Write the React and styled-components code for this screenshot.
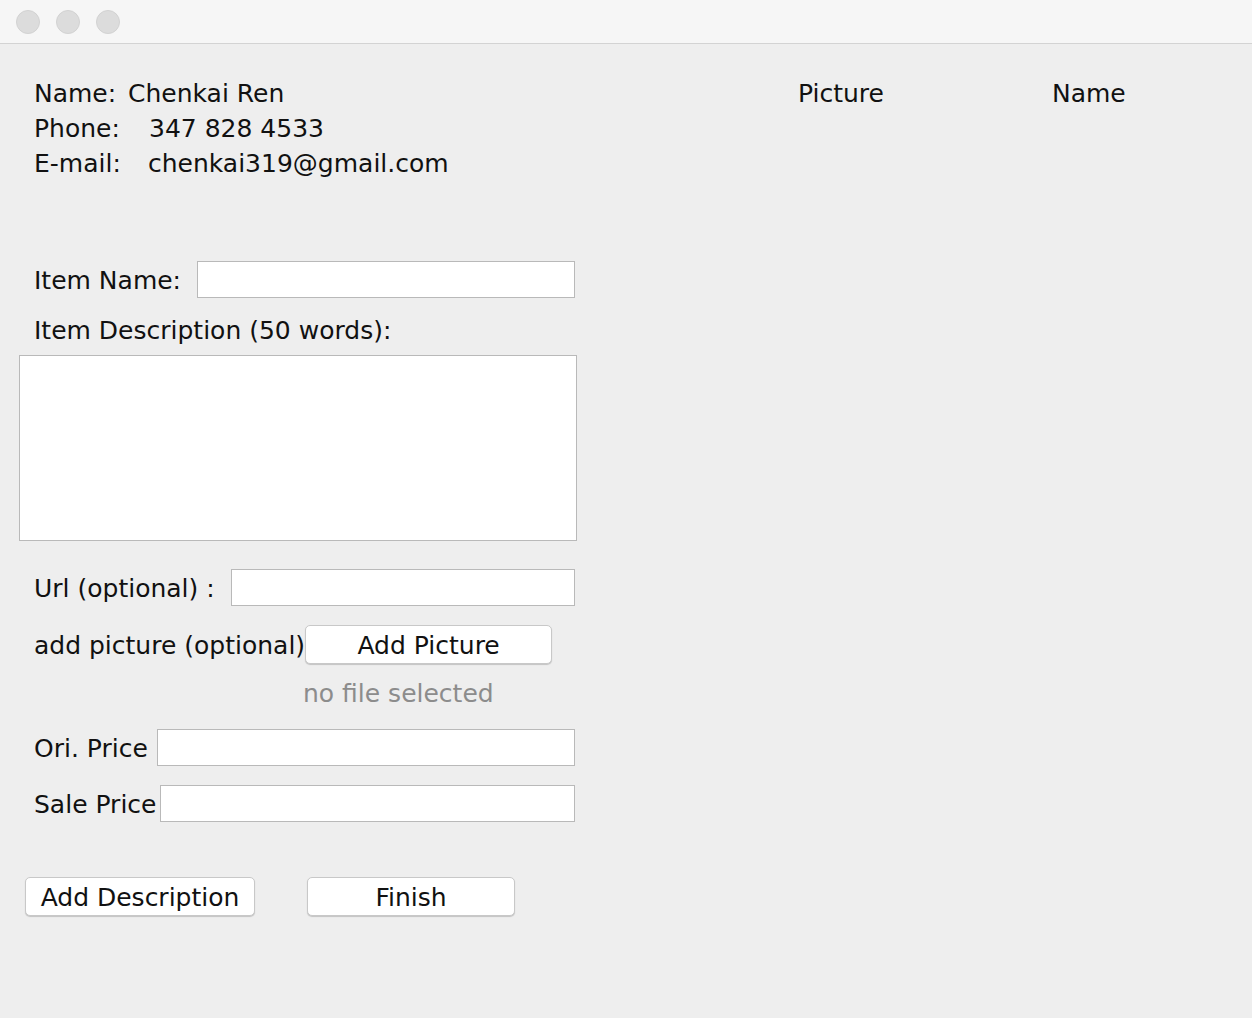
import React from 'react';
import styled, { createGlobalStyle } from 'styled-components';

const GlobalStyle = createGlobalStyle`
  html, body {
    margin: 0;
    padding: 0;
    background: #eeeeee;
  }

  body {
    font-family: 'DejaVu Sans', 'Liberation Sans', sans-serif;
    color: #111;
  }
`;

const Window = styled.div`
  width: 1252px;
  height: 1018px;
  background: #eeeeee;
  display: flex;
  flex-direction: column;
  overflow: hidden;
`;

const TitleBar = styled.div`
  height: 43px;
  flex-shrink: 0;
  background: #f6f6f6;
  border-bottom: 1px solid #d3d3d3;
  display: flex;
  align-items: center;
  gap: 16px;
  padding-left: 16px;
`;

const Light = styled.span`
  width: 24px;
  height: 24px;
  border-radius: 50%;
  background: #dcdcdc;
  border: 1px solid #d2d2d2;
  box-sizing: border-box;
`;

const Content = styled.div`
  padding: 31px 0 0 19px;
  font-size: 25px;
`;

const Header = styled.div`
  display: flex;
  align-items: flex-start;
  padding: 1px 0 0 15px;
`;

const Contact = styled.div`
  width: 764px;
  line-height: 35px;
`;

const Line = styled.div`
  display: flex;
  white-space: nowrap;
`;

const Key = styled.span`
  width: ${(p) => p.$w}px;
  flex-shrink: 0;
`;

const ColumnTitle = styled.div`
  line-height: 35px;
  width: ${(p) => p.$w}px;
`;

const Form = styled.div`
  margin-top: 80px;
  width: 560px;
  display: flex;
  flex-direction: column;
`;

const Row = styled.div`
  display: flex;
  align-items: center;
  height: ${(p) => p.$h || 37}px;
  margin-top: ${(p) => p.$top || 0}px;
  padding-left: 15px;
`;

const Label = styled.span`
  white-space: nowrap;
  padding-top: 2px;
  margin-right: ${(p) => p.$gap || 0}px;
`;

const Field = styled.div`
  flex: 1;
  height: 37px;
  background: #fff;
  border: 1px solid #b9b9b9;
  box-sizing: border-box;
  margin-right: 4px;
`;

const TextLabel = styled.div`
  line-height: 30px;
  padding-top: 1px;
  height: 30px;
  margin-top: ${(p) => p.$top}px;
  padding-left: ${(p) => p.$left || 15}px;
  color: ${(p) => (p.$muted ? '#8c8c8c' : 'inherit')};
`;

const TextArea = styled.div`
  margin-top: 9px;
  height: 186px;
  width: 558px;
  background: #fff;
  border: 1px solid #b9b9b9;
  box-sizing: border-box;
`;

const Button = styled.button`
  font-family: inherit;
  font-size: 25px;
  color: #111;
  height: 39px;
  width: ${(p) => p.$w}px;
  padding: 2px 0 0;
  background: #fff;
  border: 1px solid #c8c8c8;
  border-radius: 5px;
  box-shadow: 0 1px 1px rgba(0, 0, 0, 0.18);
  box-sizing: border-box;
  line-height: 1;
`;

const Actions = styled.div`
  display: flex;
  gap: 52px;
  margin-top: 55px;
  padding-left: 6px;
`;

export default function App() {
  return (
    <Window>
      <GlobalStyle />
      <TitleBar>
        <Light />
        <Light />
        <Light />
      </TitleBar>
      <Content>
        <Header>
          <Contact>
            <Line>
              <Key $w={94}>Name:</Key>
              <span>Chenkai Ren</span>
            </Line>
            <Line>
              <Key $w={115}>Phone:</Key>
              <span>347 828 4533</span>
            </Line>
            <Line>
              <Key $w={114}>E-mail:</Key>
              <span>chenkai319@gmail.com</span>
            </Line>
          </Contact>
          <ColumnTitle $w={254}>Picture</ColumnTitle>
          <ColumnTitle>Name</ColumnTitle>
        </Header>

        <Form>
          <Row>
            <Label $gap={16}>Item Name:</Label>
            <Field />
          </Row>
          <TextLabel $top={17}>Item Description (50 words):</TextLabel>
          <TextArea />
          <Row $top={28}>
            <Label $gap={16}>Url (optional) :</Label>
            <Field />
          </Row>
          <Row $top={19} $h={39}>
            <Label>add picture (optional)</Label>
            <Button $w={247}>Add Picture</Button>
          </Row>
          <TextLabel $top={14} $left={284} $muted>no file selected</TextLabel>
          <Row $top={20}>
            <Label $gap={9}>Ori. Price</Label>
            <Field />
          </Row>
          <Row $top={19}>
            <Label $gap={4}>Sale Price</Label>
            <Field />
          </Row>
          <Actions>
            <Button $w={230}>Add Description</Button>
            <Button $w={208}>Finish</Button>
          </Actions>
        </Form>
      </Content>
    </Window>
  );
}
